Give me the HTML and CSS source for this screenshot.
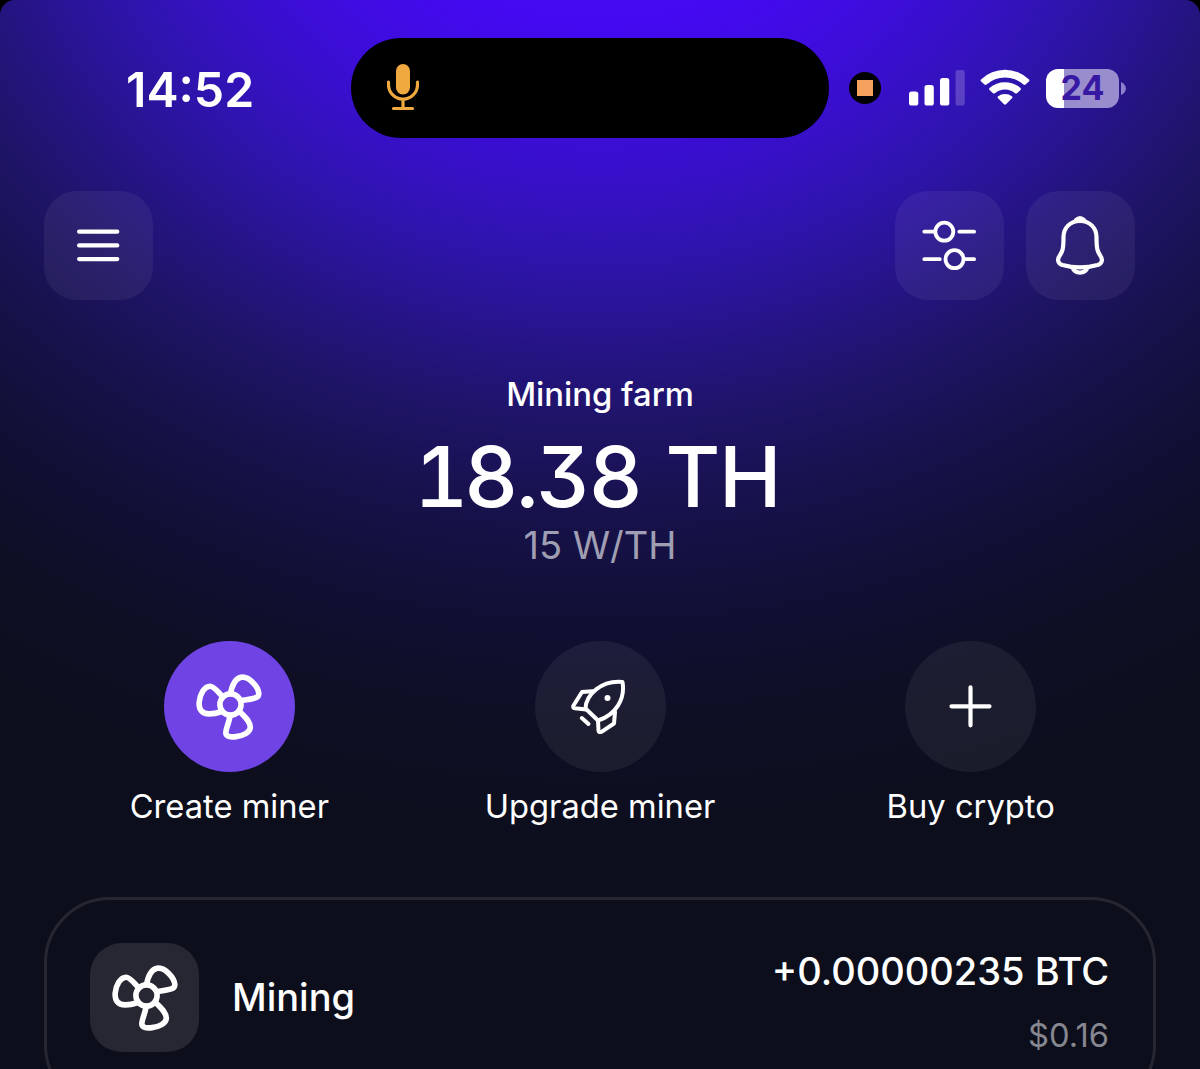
FILE: index.html
```
<!DOCTYPE html>
<html lang="en">
<head>
  <meta charset="UTF-8" />
  <meta name="viewport" content="width=device-width, initial-scale=1.0" />
  <title>Mining farm</title>
  <link rel="stylesheet" href="styles.css">
</head>
<body>
  <svg class="sprite">
    <symbol id="fan" viewBox="0 0 66 66">
      <g fill="none" stroke="#fff" stroke-width="5.6" stroke-linejoin="round">
        <circle cx="34.5" cy="30.5" r="10.6"/>
        <path d="M34.5 20 C36 11 40 4.5 45 3.3 C53 1.8 62.5 13 62.8 19.5 C63 24 59 24.6 45.5 26.5"/>
        <path d="M26.5 22.5 C22 18 18 12.2 14 12.2 C8.5 12.2 4 20 3.2 28 C2.5 36 6.5 39.7 13 39.9 C18 40 22 38.8 26 37.5"/>
        <path d="M34 42 C33 49 30 54 29.8 58.5 C29.8 62.5 34 63.4 40 62.6 C47 61.8 54 58.5 54.3 53.5 C54.5 47.5 49 43 44 38"/>
      </g>
    </symbol>
  </svg>

  <div class="screen">
    <div class="status">
      <div class="time">14:52</div>
      <div class="island">
        <svg width="32" height="48" viewBox="0 0 32 48">
          <rect x="9" y="0" width="14" height="30.5" rx="7" fill="#f0a93e"/>
          <path d="M1.5 18 V20.7 A14.5 14.5 0 0 0 30.500 20.700 V18 M16 36 V44.500 M6.500 44.500 H25.500" fill="none" stroke="#f0a93e" stroke-width="3.200" stroke-linecap="round"/>
        </svg>
      </div>
      <div class="rec"><div class="rec-square"></div></div>
      <svg class="signal" width="56" height="36" viewBox="0 0 56 36" fill="#fff">
        <rect x="0" y="21.5" width="9.3" height="14" rx="2.6"/>
        <rect x="15.5" y="15" width="9.3" height="20.5" rx="2.6"/>
        <rect x="31" y="8" width="9.3" height="27.5" rx="2.6"/>
        <rect x="46.5" y="0" width="9.3" height="35.5" rx="2.6" opacity=".2"/>
      </svg>
      <svg class="wifi" width="50" height="38" viewBox="0 0 50 38" fill="#fff">
        <path d="M1 11.5 A34.5 34.5 0 0 1 49 11.5 Q49.8 12.6 48.9 13.6 L45.5 16.6 Q44.5 17.4 43.4 16.5 A27.5 27.5 0 0 0 6.6 16.5 Q5.5 17.4 4.5 16.6 L1.1 13.6 Q.2 12.6 1 11.5 Z"/>
        <path d="M9.5 20 A23.5 23.5 0 0 1 40.5 20 Q41.3 21 40.5 22 L37 25.2 Q36 26 35 25.2 A15.5 15.5 0 0 0 15 25.2 Q14 26 13 25.2 L9.5 22 Q8.7 21 9.5 20 Z"/>
        <path d="M17.8 28.5 A12 12 0 0 1 32.2 28.5 Q32.8 29.3 32.2 30 L26 36.3 Q25 37.2 24 36.3 L17.8 30 Q17.2 29.3 17.8 28.5 Z"/>
      </svg>
      <div class="battery"><span class="level">24</span></div>
      <svg class="battery-tip" width="5" height="13" viewBox="0 0 5 13"><path d="M0 0 C6.5 3 6.5 10 0 13 Z" fill="#8b7fce"/></svg>
    </div>

    <div class="toolbar">
      <div class="btn">
        <svg width="43" height="35" viewBox="0 0 43 35" fill="none" stroke="#fff" stroke-width="4.2" stroke-linecap="round">
          <path d="M2.1 3.7 H40.3 M2.1 17.4 H40.3 M2.1 31.1 H40.3"/>
        </svg>
      </div>
      <div class="toolbar-right">
        <div class="btn">
          <svg width="55" height="51" viewBox="0 0 55 51" fill="none" stroke="#fff" stroke-width="3.8" stroke-linecap="round">
            <circle cx="22.3" cy="11.7" r="9"/>
            <circle cx="32.5" cy="39.2" r="9"/>
            <path d="M2.3 11.7 H12.3 M37.3 11.7 H52.1 M2.3 39.2 H17.8 M42.3 39.2 H52.1"/>
          </svg>
        </div>
        <div class="btn">
          <svg width="49" height="61" viewBox="0 0 49 61" fill="none" stroke="#fff" stroke-width="4.2" stroke-linejoin="round" stroke-linecap="round">
            <path d="M24 6 C14 6 7.500 13 7.500 22 C7.500 34 6.500 36.500 3.800 40.500 C.8 44.500 1.800 48.500 6.500 50 C18 53.200 30 53.200 41.500 50 C46.200 48.500 47.200 44.500 44.200 40.500 C41.500 36.500 40.500 34 40.500 22 C40.500 13 34 6 24 6 Z"/>
            <path d="M20 5 Q24 1.300 28 5 Z" fill="#fff"/>
            <path d="M16.500 52.500 C19 59.300 29 59.300 31.500 52.500"/>
          </svg>
        </div>
      </div>
    </div>

    <div class="farm">
      <div class="farm-title">Mining farm</div>
      <div class="farm-power"><span class="value"><span class="one">1</span>8.38</span> TH</div>
      <div class="farm-rate">15 W/TH</div>
    </div>

    <div class="actions">
      <div class="action">
        <div class="circle primary"><svg class="fan" width="66" height="66"><use href="#fan"/></svg></div>
        <div class="label">Create miner</div>
      </div>
      <div class="action">
        <div class="circle">
          <svg width="58" height="55" viewBox="0 0 58 55" fill="none" stroke="#fff" stroke-width="4" stroke-linejoin="round" stroke-linecap="round">
            <path d="M14.5 29.5 C15 16 30 1 51.5 3 C54.5 20 44.5 36 27 41.5 Z"/>
            <path d="M21.5 12.3 L11 13 L2.5 26.5 Q1.5 29 4 29.2 L15 30.5"/>
            <path d="M27 41.5 L27.5 51.5 Q28 54 30.5 52.8 L43 44.5 L44 33"/>
            <path d="M10.8 39 L17.5 45"/>
            <circle cx="36.5" cy="19" r="3" fill="#fff" stroke="none"/>
          </svg>
        </div>
        <div class="label">Upgrade miner</div>
      </div>
      <div class="action">
        <div class="circle">
          <svg width="43" height="43" viewBox="0 0 43 43" fill="none" stroke="#fff" stroke-width="4.2" stroke-linecap="round">
            <path d="M21.5 2.3 V40.3 M2.5 21.3 H40.5"/>
          </svg>
        </div>
        <div class="label">Buy crypto</div>
      </div>
    </div>

    <div class="card">
      <div class="tile"><svg class="fan" width="66" height="66"><use href="#fan"/></svg></div>
      <div class="name">Mining</div>
      <div class="amounts">
        <div class="btc">+0.00000235 BTC</div>
        <div class="usd">$0.16</div>
      </div>
    </div>
  </div>
</body>
</html>
```

FILE: styles.css
```
* {
  box-sizing: border-box;
}
body {
  margin: 0;
  background: #000;
  font-family: Inter, "Liberation Sans", sans-serif;
  color: #fff;
}
svg {
  display: block;
  flex: none;
}
.sprite {
  display: none;
}
.screen {
  width: 1200px;
  height: 1069px;
  overflow: hidden;
  border-radius: 15px 15px 0 0;
  background: radial-gradient(1230px 1070px at 600px -195px,
    #4608f6 0%, #4509f2 20%, #3f0ce2 27%, #3a0fd0 33%, #2f14ae 42%,
    #2a1498 47%, #241480 52%, #1e1466 58%, #17124c 66%, #110f34 76%,
    #0e0f24 86%, #0c0e1b 100%);
}
.status {
  display: flex;
  align-items: center;
  height: 100px;
  margin-top: 38px;
  padding-left: 126px;
}
.time {
  width: 225px;
  font-size: 48.2px;
  font-weight: 600;
  line-height: 60px;
  padding-top: 3px;
}
.island {
  display: flex;
  align-items: center;
  width: 478px;
  height: 100px;
  padding-left: 36px;
  border-radius: 50px;
  background: #000;
}
.rec {
  display: flex;
  align-items: center;
  justify-content: center;
  width: 32px;
  height: 32px;
  margin-left: 20px;
  border-radius: 50%;
  background: #000;
}
.rec-square {
  width: 16px;
  height: 16px;
  background: #f5a25f;
}
.signal {
  margin-left: 28px;
}
.wifi {
  margin: -2px 0 0 15px;
}
.battery {
  width: 73px;
  height: 39px;
  margin-left: 16px;
  border-radius: 12px;
  background: linear-gradient(90deg, #fff 18px, #998dcd 18px);
  text-align: center;
}
.level {
  font-size: 34px;
  font-weight: 700;
  line-height: 38px;
  color: #3718a2;
}
.battery-tip {
  margin-left: 2px;
}
.toolbar {
  display: flex;
  justify-content: space-between;
  margin-top: 53px;
  padding: 0 65px 0 44px;
}
.toolbar-right {
  display: flex;
  gap: 22px;
}
.btn {
  display: flex;
  align-items: center;
  justify-content: center;
  width: 109px;
  height: 109px;
  border-radius: 33px;
  background: rgba(255, 255, 255, .06);
}
.farm {
  display: flex;
  flex-direction: column;
  align-items: center;
  margin-top: 74px;
}
.farm-title {
  font-size: 32.8px;
  font-weight: 500;
  line-height: 40px;
}
.farm-power {
  margin-top: 21px;
  padding-right: 6px;
  font-size: 84px;
  font-weight: 500;
  line-height: 84px;
  letter-spacing: -1.5px;
  font-feature-settings: "tnum", "cv09";
}
.value {
  margin-right: 4px;
  letter-spacing: -2.3px;
}
.one {
  letter-spacing: -4.5px;
}
.farm-rate {
  margin-top: 3px;
  font-size: 38px;
  line-height: 46px;
  color: rgba(255, 255, 255, .6);
}
.actions {
  display: flex;
  margin: 73px 44px 0;
}
.action {
  display: flex;
  flex: 1;
  flex-direction: column;
  align-items: center;
}
.circle {
  display: flex;
  align-items: center;
  justify-content: center;
  width: 131px;
  height: 131px;
  border-radius: 50%;
  background: rgba(255, 255, 255, .06);
}
.primary {
  background: #7043e4;
}
.label {
  margin-top: 14px;
  font-size: 32.7px;
  line-height: 40px;
}
.card {
  display: flex;
  height: 214px;
  margin: 71px 44px 0;
  padding: 43px 44px 0 43px;
  border: 3px solid #252631;
  border-radius: 66px;
}
.tile {
  display: flex;
  align-items: center;
  justify-content: center;
  width: 109px;
  height: 109px;
  border-radius: 32px;
  background: #272733;
}
.name {
  margin-left: 33px;
  font-size: 38px;
  font-weight: 500;
  line-height: 109px;
}
.amounts {
  margin-left: auto;
  text-align: right;
}
.btc {
  margin-top: 5px;
  font-size: 38px;
  font-weight: 500;
  line-height: 46px;
}
.usd {
  margin-top: 21px;
  font-size: 32.7px;
  line-height: 40px;
  color: #868790;
}
```
